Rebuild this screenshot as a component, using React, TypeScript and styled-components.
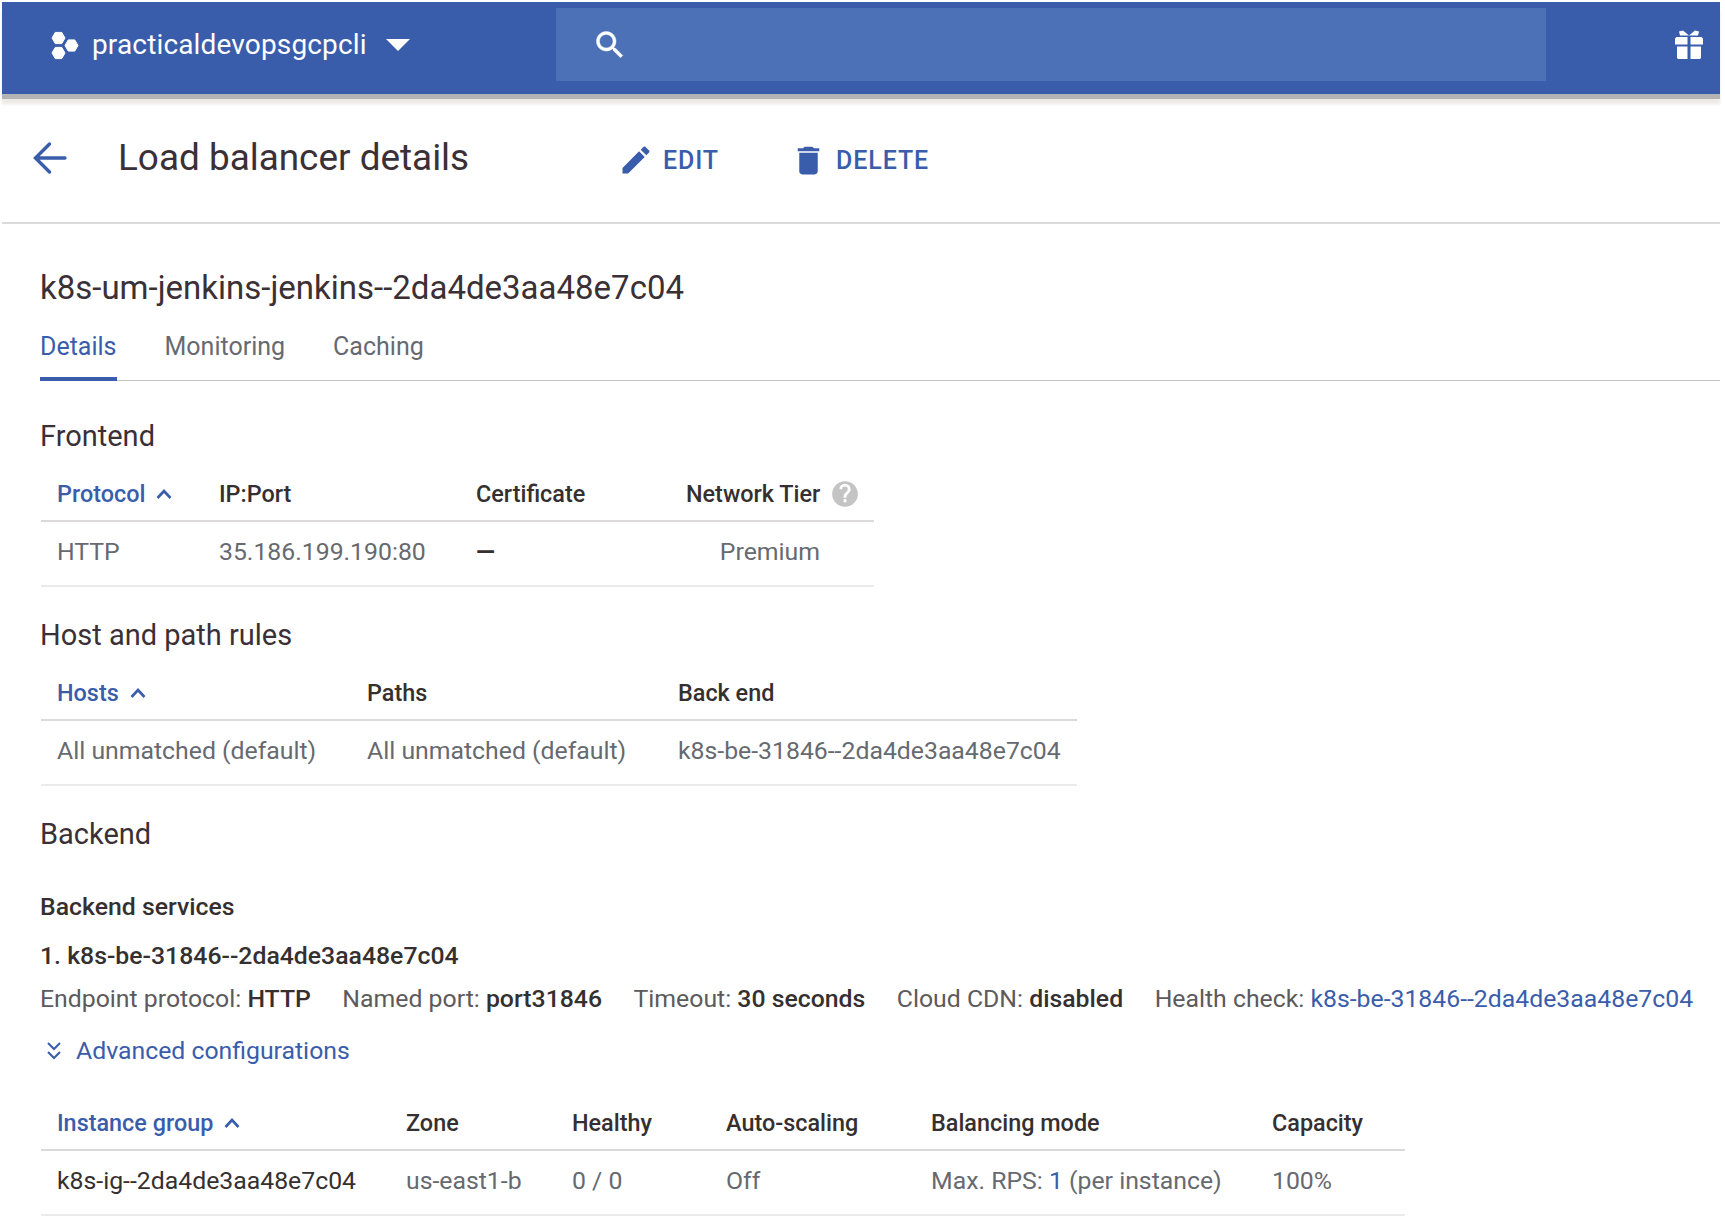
import React from 'react'
import styled, { createGlobalStyle } from 'styled-components'

const GlobalStyle = createGlobalStyle`
  html, body {
    margin: 0;
    padding: 0;
    background: #fff;
    font-family: Roboto, "Liberation Sans", sans-serif;
    color: #333;
  }
`

const Page = styled.div`
  width: 1725px;
  height: 1220px;
  overflow: hidden;
  background: #fff;
`

const TopBar = styled.header`
  height: 92px;
  margin: 2px 5px 0 2px;
  padding-bottom: 7px;
  box-sizing: border-box;
  background: #3a5dab;
  box-shadow: 0 5px 0 #b4b3b4, 0 10px 3px #ece9e6;
  display: flex;
  align-items: center;
`

const Project = styled.div`
  width: 554px;
  padding-left: 48px;
  box-sizing: border-box;
  display: flex;
  align-items: center;
  color: #fff;
  font-size: 28px;
  letter-spacing: 0.15px;
`

const ProjectName = styled.span`
  margin: -1px 18px 0 12px;
`

const SearchBox = styled.div`
  width: 990px;
  height: 73px;
  background: #4c71b7;
  display: flex;
  align-items: center;
  padding-left: 36px;
  box-sizing: border-box;
`

const GiftSlot = styled.div`
  margin-left: auto;
  margin-right: 17px;
  display: flex;
`

const ActionBar = styled.div`
  height: 128px;
  margin: 0 5px 0 2px;
  border-bottom: 2px solid #dadada;
  display: flex;
  align-items: center;
`

const BackButton = styled.div`
  width: 116px;
  padding-left: 30px;
  box-sizing: border-box;
  display: flex;
`

const PageTitle = styled.h1`
  margin: 0;
  width: 500px;
  font-size: 36.9px;
  font-weight: 400;
  color: #3a3035;
  line-height: 40px;
`

const ActionButton = styled.div<{ $after: number }>`
  display: flex;
  align-items: center;
  gap: 9px;
  margin-top: 4px;
  margin-right: ${({ $after }) => $after}px;
  color: #3a5dab;
  font-size: 25px;
  font-weight: 500;
  letter-spacing: 0.9px;
`

const Content = styled.main`
  padding: 44px 0 0 40px;
`

const ResourceName = styled.h2`
  margin: 0;
  font-size: 33px;
  font-weight: 400;
  line-height: 40px;
  color: #3a3035;
`

const TabRow = styled.nav`
  margin-top: 19px;
  margin-right: 5px;
  height: 54px;
  display: flex;
  gap: 48px;
  border-bottom: 1px solid #c6c6c6;
  box-sizing: border-box;
`

const Tab = styled.div<{ $active?: boolean }>`
  font-size: 25px;
  line-height: 40px;
  height: 54px;
  box-sizing: border-box;
  color: ${({ $active }) => ($active ? '#3a5dab' : '#666a70')};
  border-bottom: ${({ $active }) => ($active ? '4px solid #3a5dab' : 'none')};
`

const SectionTitle = styled.h3<{ $top: number }>`
  margin: ${({ $top }) => $top}px 0 0;
  font-size: 29px;
  font-weight: 400;
  line-height: 36px;
  color: #3a3035;
`

const Table = styled.div<{ $columns: string; $width: number }>`
  width: ${({ $width }) => $width}px;
  margin-left: 1px;
  display: grid;
  grid-template-columns: ${({ $columns }) => $columns};
`

const HeadCell = styled.div<{ $sort?: boolean }>`
  height: 54px;
  margin-top: 14px;
  padding-left: ${({ $sort }) => ($sort ? '16px' : '0')};
  box-sizing: border-box;
  display: flex;
  align-items: center;
  gap: 10px;
  border-bottom: 2px solid #dcdad8;
  font-size: 23.4px;
  font-weight: 500;
  color: ${({ $sort }) => ($sort ? '#3a5dab' : '#35302f')};
  white-space: nowrap;
`

const HelpIcon = styled.svg`
  margin-left: 1px;
  fill: #c4c4c4;
`

const Cell = styled.div<{ $dark?: boolean; $right?: boolean; $lead?: boolean }>`
  height: 65px;
  box-sizing: border-box;
  display: flex;
  align-items: center;
  justify-content: ${({ $right }) => ($right ? 'flex-end' : 'flex-start')};
  padding: 0 ${({ $right }) => ($right ? '54px' : '0')} 5px ${({ $lead }) => ($lead ? '16px' : '0')};
  border-bottom: 2px solid #eaeaea;
  font-size: 24.8px;
  color: ${({ $dark }) => ($dark ? '#35302f' : '#666a70')};
  white-space: pre;
`

const Dash = styled.span`
  font-weight: 700;
  color: #35302f;
`

const Strong = styled.div<{ $top: number }>`
  margin-top: ${({ $top }) => $top}px;
  font-size: 24.8px;
  font-weight: 500;
  line-height: 30px;
  color: #35302f;
`

const InfoRow = styled.div`
  margin-top: 13px;
  display: flex;
  gap: 31.5px;
  font-size: 24.8px;
  line-height: 30px;
  color: #5c5a5c;
  white-space: nowrap;
`

const InfoValue = styled.b`
  font-weight: 500;
  color: #35302f;
`

const Link = styled.span`
  color: #3a5dab;
`

const Advanced = styled.div`
  margin-top: 22px;
  margin-bottom: 17px;
  padding-left: 6px;
  display: flex;
  align-items: center;
  gap: 14px;
  font-size: 24.8px;
  line-height: 30px;
  color: #3a5dab;
`

const SortUp = () => (
  <svg width="18" height="18" viewBox="0 0 18 18" fill="none" stroke="#3a5dab" strokeWidth="2.6">
    <path d="M2.5 13 L9 6 L15.5 13" />
  </svg>
)

export default function App() {
  return (
    <Page>
      <GlobalStyle />
      <TopBar>
        <Project>
          <svg width="30" height="32" viewBox="0 0 30 32" fill="#fff" stroke="#fff" strokeLinejoin="round">
            <polygon points="2,9 5.25,3.4 11.75,3.4 15,9 11.75,14.6 5.25,14.6" />
            <polygon points="2,24 5.25,18.4 11.75,18.4 15,24 11.75,29.6 5.25,29.6" />
            <polygon points="15,16.5 18.25,10.9 24.75,10.9 28,16.5 24.75,22.1 18.25,22.1" />
          </svg>
          <ProjectName>practicaldevopsgcpcli</ProjectName>
          <svg width="26" height="14" viewBox="0 0 26 14" fill="#fff">
            <path d="M1 1 H25 L13 13 Z" />
          </svg>
        </Project>
        <SearchBox>
          <svg width="36" height="36" viewBox="0 0 24 24" fill="#fff" stroke="#fff" strokeWidth="0.3">
            <path d="M15.5 14h-.79l-.28-.27C15.41 12.59 16 11.11 16 9.5 16 5.91 13.09 3 9.5 3S3 5.91 3 9.5 5.91 16 9.5 16c1.61 0 3.09-.59 4.23-1.57l.27.28v.79l5 4.99L20.49 19l-4.99-5zm-6 0C7.01 14 5 11.99 5 9.5S7.01 5 9.5 5 14 7.01 14 9.5 11.99 14 9.5 14z" />
          </svg>
        </SearchBox>
        <GiftSlot>
          <svg width="28" height="29" viewBox="0 0 28 29" fill="#fff">
            <path d="M1.5 7 H12.5 V14.5 H0 V8.5 Z M15.5 7 H26.5 L28 8.5 V14.5 H15.5 Z M2 16.5 H12.5 V29 H3 L2 28 Z M15.5 16.5 H26 V28 L25 29 H15.5 Z" />
            <path d="M14 5.5 L8 0.5 L4 1.5 L5 5.5 Z M14 5.5 L20 0.5 L24 1.5 L23 5.5 Z" />
          </svg>
        </GiftSlot>
      </TopBar>

      <ActionBar>
        <BackButton>
          <svg width="38" height="38" viewBox="0 0 38 38" fill="none" stroke="#3a5dab" strokeWidth="3.4" strokeLinecap="round">
            <path d="M33 19 H5 M17.5 5 L3.5 19 L17.5 33" />
          </svg>
        </BackButton>
        <PageTitle>Load balancer details</PageTitle>
        <ActionButton $after={71}>
          <svg width="36" height="36" viewBox="0 0 24 24" fill="#3a5dab">
            <path d="M3 17.25V21h3.75L17.81 9.94l-3.75-3.75L3 17.25zM20.71 7.04c.39-.39.39-1.02 0-1.41l-2.34-2.34c-.39-.39-1.02-.39-1.41 0l-1.83 1.83 3.75 3.75 1.83-1.83z" />
          </svg>
          EDIT
        </ActionButton>
        <ActionButton $after={0}>
          <svg width="37" height="37" viewBox="0 0 24 24" fill="#3a5dab">
            <path d="M6 19c0 1.1.9 2 2 2h8c1.1 0 2-.9 2-2V7H6v12zM19 4h-3.5l-1-1h-5l-1 1H5v2h14V4z" />
          </svg>
          DELETE
        </ActionButton>
      </ActionBar>

      <Content>
        <ResourceName>k8s-um-jenkins-jenkins--2da4de3aa48e7c04</ResourceName>
        <TabRow>
          <Tab $active>Details</Tab>
          <Tab>Monitoring</Tab>
          <Tab>Caching</Tab>
        </TabRow>

        <SectionTitle $top={37}>Frontend</SectionTitle>
        <Table $columns="178px 257px 210px 188px" $width={833}>
          <HeadCell $sort>Protocol <SortUp /></HeadCell>
          <HeadCell>IP:Port</HeadCell>
          <HeadCell>Certificate</HeadCell>
          <HeadCell>
            Network Tier
            <HelpIcon width="28" height="28" viewBox="0 0 24 24">
              <path d="M12 1a11 11 0 1 0 0 22 11 11 0 0 0 0-22zm1.2 18h-2.4v-2.4h2.4V19zm2.5-8.2-1.1 1.1c-.9.9-1.4 1.6-1.4 3.3h-2.4v-.6c0-1.3.5-2.5 1.4-3.4l1.5-1.5c.4-.4.7-1 .7-1.7a2.4 2.4 0 0 0-4.8 0H7.2a4.8 4.8 0 0 1 9.6 0c0 1.1-.4 2-1.1 2.8z" />
            </HelpIcon>
          </HeadCell>
          <Cell $lead>HTTP</Cell>
          <Cell>35.186.199.190:80</Cell>
          <Cell><Dash>—</Dash></Cell>
          <Cell $right>Premium</Cell>
        </Table>

        <SectionTitle $top={30}>Host and path rules</SectionTitle>
        <Table $columns="326px 311px 399px" $width={1036}>
          <HeadCell $sort>Hosts <SortUp /></HeadCell>
          <HeadCell>Paths</HeadCell>
          <HeadCell>Back end</HeadCell>
          <Cell $lead>All unmatched (default)</Cell>
          <Cell>All unmatched (default)</Cell>
          <Cell>k8s-be-31846--2da4de3aa48e7c04</Cell>
        </Table>

        <SectionTitle $top={30}>Backend</SectionTitle>
        <Strong $top={40}>Backend services</Strong>
        <Strong $top={19}>1. k8s-be-31846--2da4de3aa48e7c04</Strong>
        <InfoRow>
          <span>Endpoint protocol: <InfoValue>HTTP</InfoValue></span>
          <span>Named port: <InfoValue>port31846</InfoValue></span>
          <span>Timeout: <InfoValue>30 seconds</InfoValue></span>
          <span>Cloud CDN: <InfoValue>disabled</InfoValue></span>
          <span>Health check: <Link>k8s-be-31846--2da4de3aa48e7c04</Link></span>
        </InfoRow>
        <Advanced>
          <svg width="16" height="18" viewBox="0 0 16 18" fill="none" stroke="#3a5dab" strokeWidth="2">
            <path d="M2 1 L8 7 L14 1 M2 10 L8 16 L14 10" />
          </svg>
          Advanced configurations
        </Advanced>
        <Table $columns="365px 166px 154px 205px 341px 133px" $width={1364}>
          <HeadCell $sort>Instance group <SortUp /></HeadCell>
          <HeadCell>Zone</HeadCell>
          <HeadCell>Healthy</HeadCell>
          <HeadCell>Auto-scaling</HeadCell>
          <HeadCell>Balancing mode</HeadCell>
          <HeadCell>Capacity</HeadCell>
          <Cell $dark $lead>k8s-ig--2da4de3aa48e7c04</Cell>
          <Cell>us-east1-b</Cell>
          <Cell>0 / 0</Cell>
          <Cell>Off</Cell>
          <Cell>Max. RPS: <Link>1</Link> (per instance)</Cell>
          <Cell>100%</Cell>
        </Table>
      </Content>
    </Page>
  )
}
